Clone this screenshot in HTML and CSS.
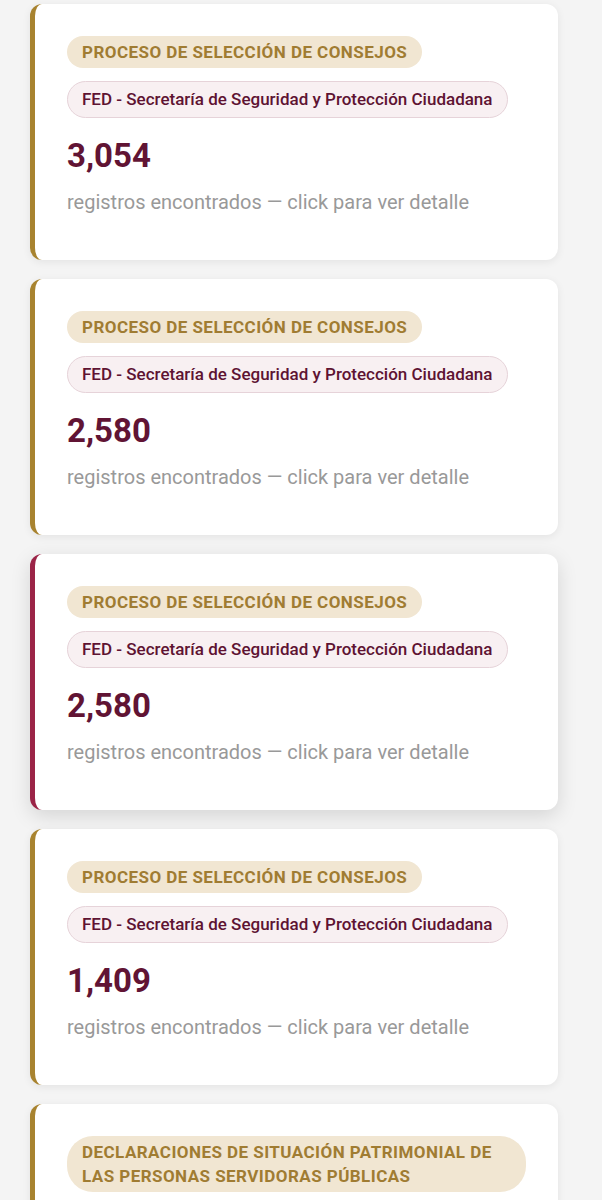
FILE: index.html
```html
<!DOCTYPE html>
<html lang="es">
<head>
<meta charset="UTF-8" />
<meta name="viewport" content="width=device-width, initial-scale=1" />
<title>Resultados</title>
<link rel="stylesheet" href="styles.css">
</head>
<body>
    <div class="results">
        <div class="result-card">
            <span class="tag-section">Proceso de selección de consejos</span>
            <span class="tag-entity">FED - Secretaría de Seguridad y Protección Ciudadana</span>
            <div class="count">3,054</div>
            <div class="hint">registros encontrados — click para ver detalle</div>
        </div>
        <div class="result-card">
            <span class="tag-section">Proceso de selección de consejos</span>
            <span class="tag-entity">FED - Secretaría de Seguridad y Protección Ciudadana</span>
            <div class="count">2,580</div>
            <div class="hint">registros encontrados — click para ver detalle</div>
        </div>
        <div class="result-card active">
            <span class="tag-section">Proceso de selección de consejos</span>
            <span class="tag-entity">FED - Secretaría de Seguridad y Protección Ciudadana</span>
            <div class="count">2,580</div>
            <div class="hint">registros encontrados — click para ver detalle</div>
        </div>
        <div class="result-card">
            <span class="tag-section">Proceso de selección de consejos</span>
            <span class="tag-entity">FED - Secretaría de Seguridad y Protección Ciudadana</span>
            <div class="count">1,409</div>
            <div class="hint">registros encontrados — click para ver detalle</div>
        </div>
        <div class="result-card">
            <span class="tag-section">Declaraciones de situación patrimonial de las personas servidoras públicas</span>
            <span class="tag-entity">FED - Secretaría de Seguridad y Protección Ciudadana</span>
            <div class="count">1,212</div>
            <div class="hint">registros encontrados — click para ver detalle</div>
        </div>
    </div>
</body>
</html>
```

FILE: styles.css
```css
body {
    font-family: Roboto, "Noto Sans", sans-serif;
    background: #f4f4f4;
    margin: 0;
}

.results {
    display: flex;
    flex-direction: column;
    gap: 19px;
    padding: 4px 44px 20px 30px;
}

.result-card {
    display: flex;
    flex-direction: column;
    align-items: flex-start;
    background: #ffffff;
    border-left: 5px solid #a8832f;
    border-radius: 12px;
    padding: 32px 32px 46px 32px;
    box-shadow: 0 2px 8px rgba(0,0,0,0.07);
    cursor: pointer;
}

.result-card.active {
    border-left-color: #9b2447;
    box-shadow: 0 6px 20px rgba(0,0,0,0.13);
}

.tag-section {
    background: #f1e6d2;
    color: #a07c32;
    font-weight: 700;
    font-size: 17px;
    line-height: 24px;
    text-transform: uppercase;
    letter-spacing: 0.45px;
    padding: 4px 15px;
    border-radius: 26px;
}

.tag-entity {
    margin-top: 13px;
    background: #f8f0f2;
    color: #5e1332;
    border: 1px solid #e6d3d9;
    font-weight: 500;
    font-size: 17px;
    line-height: 21px;
    padding: 7px 14px;
    border-radius: 20px;
}

.count {
    margin-top: 18px;
    color: #611434;
    font-size: 33px;
    font-weight: 700;
    line-height: 40px;
}

.hint {
    margin-top: 14px;
    color: #999999;
    font-size: 20px;
    line-height: 24px;
}
```
